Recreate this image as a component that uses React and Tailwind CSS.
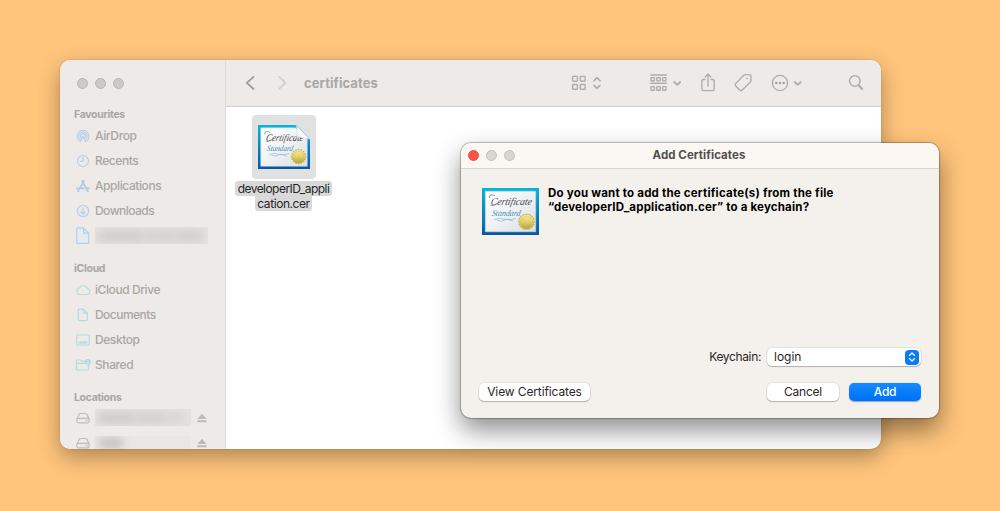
import React from 'react';

const SIDEBAR_ICONS = {
  airdrop: (
    <g stroke="#b3cfee" strokeWidth="1.1">
      <path d="M4.2 12.6A6 6 0 1 1 9.8 12.6" />
      <path d="M4.4 10.4A4.2 4.2 0 1 1 9.6 10.4" />
      <path d="M5.2 8.8A2.4 2.4 0 1 1 8.8 8.8" />
      <path d="M7 7.2L4.3 12.8M7 7.2L9.7 12.8" />
    </g>
  ),
  clock: (
    <g stroke="#b3cfee" strokeWidth="1.2">
      <circle cx="7" cy="7" r="5.5" />
      <path d="M7 3.2V7.3H4.2" />
    </g>
  ),
  apps: (
    <g stroke="#adcbed" strokeWidth="1.7">
      <path d="M6.1 2L10.9 10.9M11.3 11.6L12 12.6" />
      <path d="M8 2L3.8 9.4M2.9 11L2.1 12.5" />
      <path d="M.9 9.3H7.6M10.4 9.3H13.1" />
    </g>
  ),
  download: (
    <g stroke="#b3cfee" strokeWidth="1.2">
      <circle cx="7" cy="7" r="5.6" />
      <path d="M7 3.8V10M4.9 8L7 10.1L9.1 8" />
    </g>
  ),
  bigdoc: (
    <path d="M.8-1.2H7.6L12.7 4.1V14.3H.8ZM7.6-1.2V4.1H12.7" stroke="#b3cfee" strokeWidth="1.2" fill="#e6ebf2" />
  ),
  cloud: (
    <path
      d="M3.3 11.5H10.8A3.1 3.1 0 0 0 11.4 5.4A4.2 4.2 0 0 0 3.7 4.9A3.4 3.4 0 0 0 3.3 11.5Z"
      stroke="#bcdedb"
      strokeWidth="1.2"
    />
  ),
  doc: (
    <path
      d="M3.4 1.1H7.4L11.4 5.1V11.6Q11.4 12.7 10.3 12.7H3.4Q2.3 12.7 2.3 11.6V2.2Q2.3 1.1 3.4 1.1ZM7.4 1.1V5.1H11.4"
      stroke="#b2dbe0"
      strokeWidth="1.2"
    />
  ),
  desktop: (
    <g stroke="#b2dbe0">
      <rect x=".7" y="2" width="12.6" height="10" rx="1.2" strokeWidth="1.2" />
      <path d="M3.4 9.5H10.6" strokeWidth="1.8" />
    </g>
  ),
  shared: (
    <g stroke="#b2dbe0" strokeWidth="1.2">
      <path d="M9 3.2H5.8L4.7 2H1.4Q.4 2 .4 3V11Q.4 12 1.4 12H11.5Q12.5 12 12.5 11V7M.4 5.3H9.2" />
      <circle cx="12" cy="3.9" r="2.9" fill="#a9d8df" stroke="none" />
      <path d="M12 2.4V4.2M10.8 5.2H13.2" stroke="#edf0ef" strokeWidth=".8" />
    </g>
  ),
  disk: (
    <g stroke="#c1beba" strokeWidth="1.2">
      <path d="M1 8L3.2 3.3Q3.6 2.5 4.5 2.5H9.6Q10.5 2.5 10.9 3.3L13 8" />
      <rect x=".9" y="7.3" width="12.2" height="4.6" rx="1.7" />
      <path d="M10 9.7H11.3" />
    </g>
  ),
};

function SidebarIcon({ name }) {
  return (
    <svg className="h-3.5 w-3.5 shrink-0 overflow-visible" viewBox="0 0 14 14" fill="none" strokeLinecap="round" strokeLinejoin="round">
      {SIDEBAR_ICONS[name]}
    </svg>
  );
}

function Row({ icon, label, tracking = '' }) {
  return (
    <div className="flex h-[25px] shrink-0 items-center gap-[5px] pl-4">
      <SidebarIcon name={icon} />
      <span className={`text-[12px] font-medium leading-none text-[#aaa6a3] ${tracking}`}>{label}</span>
    </div>
  );
}

function Heading({ children }) {
  return (
    <div className="flex h-[18px] shrink-0 items-center pl-3.5 text-[10.5px] font-bold tracking-[-0.03em] text-[#aaa6a3]">
      {children}
    </div>
  );
}

function Redacted({ box, bars }) {
  return (
    <div className={`flex items-center overflow-hidden px-1 ${box}`}>
      {bars.map((b, i) => (
        <span key={i} className={`h-2.5 shrink-0 rounded blur-[4px] ${b}`} />
      ))}
    </div>
  );
}

function Drive({ bars, box }) {
  return (
    <div className="flex h-[25px] shrink-0 items-center pl-4">
      <SidebarIcon name="disk" />
      <div className="ml-[5px] w-24">
        <Redacted box={box} bars={bars} />
      </div>
      <svg className="ml-[6px] h-2.5 w-2.5" viewBox="0 0 10 10" fill="#bdbab7">
        <path d="M5 .8L9.6 5.9H.4ZM.4 7.2H9.6V9.2H.4Z" />
      </svg>
    </div>
  );
}

function Certificate({ folded, className }) {
  const id = folded ? 'folded' : 'flat';
  const scallops = Array.from({ length: 16 }, (_, i) => {
    const a = (i * Math.PI) / 8;
    return [44.5 + 7.3 * Math.cos(a), 34.5 + 7.3 * Math.sin(a)];
  });
  return (
    <svg className={className} viewBox="0 0 57 48" preserveAspectRatio="none">
      <defs>
        <linearGradient id={`${id}-frame`} x1="0" y1="0" x2="0" y2="1">
          <stop offset="0" stopColor="#05b5dc" />
          <stop offset="1" stopColor="#0757a0" />
        </linearGradient>
        <linearGradient id={`${id}-paper`} x1="0" y1="0" x2="1" y2="1">
          <stop offset="0" stopColor="#ffffff" />
          <stop offset=".5" stopColor="#f0f1f3" />
          <stop offset="1" stopColor="#dcdfe3" />
        </linearGradient>
        <linearGradient id={`${id}-seal`} x1="0" y1="0" x2="0" y2="1">
          <stop offset="0" stopColor="#f3ecab" />
          <stop offset=".5" stopColor="#e2d068" />
          <stop offset="1" stopColor="#b5a03c" />
        </linearGradient>
        <linearGradient id={`${id}-fold`} x1="0" y1="1" x2=".6" y2=".3">
          <stop offset="0" stopColor="#c9cacc" />
          <stop offset=".5" stopColor="#ffffff" />
          <stop offset="1" stopColor="#f1f1f1" />
        </linearGradient>
      </defs>
      <path d={folded ? 'M0 0H42L57 15V48H0Z' : 'M0 0H57V48H0Z'} fill={`url(#${id}-frame)`} />
      <path d={folded ? 'M3 3H41L54 15V45H3Z' : 'M3.3 3.3H53.7V44.7H3.3Z'} fill={`url(#${id}-paper)`} stroke="#b9d9e8" strokeWidth=".6" />
      <g transform="skewX(-12)" fontFamily="'Liberation Serif', serif" fontStyle="italic">
        <text x="12" y="17.5" fontSize="11" textLength="41" lengthAdjust="spacingAndGlyphs" fill="#4b4b4f">
          Certificate
        </text>
        <text x="15.5" y="28.5" fontSize="9" textLength="28.5" lengthAdjust="spacingAndGlyphs" fill="#3f8fbe">
          Standard
        </text>
      </g>
      <path d="M13 8C9 5.5 5.8 8.5 8 10.5M8.5 17.5Q11 19.5 15 16" fill="none" stroke="#66666b" strokeWidth=".7" />
      <path d="M12 32.3Q17 29.8 23 32Q29 34 34 31M15 33Q20 35 23 32.4Q28 30.5 31 34" fill="none" stroke="#8cbdd9" strokeWidth=".8" />
      {scallops.map(([x, y], i) => (
        <circle key={i} cx={x} cy={y} r="1.2" fill="#cbb651" />
      ))}
      <circle cx="44.5" cy="34.5" r="7.3" fill={`url(#${id}-seal)`} />
      <circle cx="44.5" cy="34.5" r="5.8" fill="none" stroke="#c9b550" strokeWidth=".4" />
      {folded && (
        <>
          <path d="M42-.5L57.5 15.5V-.5Z" fill="#e1e1e1" />
          <path d="M41.5 0Q44.5 8 42 14Q49 12.5 57 15.5Z" fill={`url(#${id}-fold)`} stroke="#cccccc" strokeWidth=".4" />
        </>
      )}
    </svg>
  );
}

function Lights({ first = 'border-[#b9b6b2] bg-[#cdcac6]', rest = 'border-[#b9b6b2] bg-[#cdcac6]' }) {
  return (
    <>
      <span className={`size-[11px] rounded-full border ${first}`} />
      <span className={`size-[11px] rounded-full border ${rest}`} />
      <span className={`size-[11px] rounded-full border ${rest}`} />
    </>
  );
}

function Toolbar() {
  return (
    <div className="flex h-[47px] shrink-0 items-center border-b border-[#d3d0cd] bg-[#eeeae7] pl-[19px]">
      <svg className="h-4 w-10 shrink-0 overflow-visible" viewBox="0 0 40 16" fill="none" strokeLinecap="round" strokeLinejoin="round">
        <path d="M8.5 1.8L1.8 7.9L8.5 14" stroke="#9d9a97" strokeWidth="1.7" />
        <path d="M34 1.8L40.3 7.9L34 14" stroke="#cfccc9" strokeWidth="1.6" />
      </svg>
      <span className="ml-[19px] w-[259px] text-[13px] font-bold leading-none tracking-[0.005em] text-[#aaa7a4]">certificates</span>
      <svg className="h-6 w-[300px] shrink-0" viewBox="563 71 300 24" fill="none" stroke="#b0adaa" strokeWidth="1.4" strokeLinecap="round" strokeLinejoin="round">
        <rect x="572.6" y="76.4" width="4.8" height="4.8" rx=".6" />
        <rect x="580.3" y="76.4" width="4.8" height="4.8" rx=".6" />
        <rect x="572.6" y="84.5" width="4.8" height="4.8" rx=".6" />
        <rect x="580.3" y="84.5" width="4.8" height="4.8" rx=".6" />
        <path d="M594 80.6L597 77.6L600 80.6M594 85.4L597 88.4L600 85.4" strokeWidth="1.7" />
        <path d="M650.8 75H666.3M650.8 83.2H666.3" />
        <rect x="651" y="77.6" width="3.4" height="3.2" rx=".5" />
        <rect x="656.8" y="77.6" width="3.4" height="3.2" rx=".5" />
        <rect x="662.6" y="77.6" width="3.4" height="3.2" rx=".5" />
        <rect x="651" y="86.6" width="3.4" height="3.6" rx=".5" />
        <rect x="656.8" y="86.6" width="3.4" height="3.6" rx=".5" />
        <rect x="662.6" y="86.6" width="3.4" height="3.6" rx=".5" />
        <path d="M674.3 82L677.3 84.8L680.3 82" strokeWidth="1.8" />
        <path d="M705 79.5H703.2Q701.9 79.5 701.9 80.8V89.3Q701.9 90.6 703.2 90.6H712.9Q714.2 90.6 714.2 89.3V80.8Q714.2 79.5 712.9 79.5H711M708 86V74.3M705.2 76.9L708 74.1L710.8 76.9" />
        <path d="M735.7 83.4L743.8 75.3Q744.5 74.6 745.5 74.6H749Q751 74.6 751 76.6V80.2Q751 81.2 750.3 81.9L742.3 90Q741 91.3 739.7 90L735.7 86Q734.5 84.7 735.7 83.4Z" />
        <circle cx="747" cy="78.4" r=".8" fill="#aba8a5" stroke="none" />
        <circle cx="780" cy="83" r="7.6" />
        <g fill="#a19e9b" stroke="none">
          <circle cx="776.3" cy="83" r="1.2" />
          <circle cx="780" cy="83" r="1.2" />
          <circle cx="783.7" cy="83" r="1.2" />
        </g>
        <path d="M794.7 82L797.7 84.8L800.7 82" strokeWidth="1.8" />
        <circle cx="854.8" cy="81" r="5.3" strokeWidth="1.5" />
        <path d="M858.8 85.2L862.1 89" strokeWidth="2.1" />
      </svg>
    </div>
  );
}

function Finder() {
  return (
    <section className="flex h-[389px] w-[821px] overflow-hidden rounded-[10px] bg-white shadow-[0_0_1px_rgba(0,0,0,0.5),0_8px_22px_rgba(0,0,0,0.32)]">
      <aside className="flex w-[166px] shrink-0 flex-col overflow-hidden border-r border-[#e0dcd9] bg-[#eeeae7]">
        <div className="flex h-[46px] shrink-0 items-center gap-[7px] pl-[17px]">
          <Lights />
        </div>
        <Heading>Favourites</Heading>
        <div className="-mt-px h-0 shrink-0" />
        <Row icon="airdrop" label="AirDrop" tracking="tracking-[-0.03em]" />
        <Row icon="clock" label="Recents" tracking="tracking-[-0.035em]" />
        <Row icon="apps" label="Applications" tracking="tracking-[-0.035em]" />
        <Row icon="download" label="Downloads" tracking="tracking-[-0.045em]" />
        <div className="flex h-[25px] shrink-0 items-center gap-[5px] pl-4">
          <SidebarIcon name="bigdoc" />
          <Redacted box="h-[17px] w-[113px] bg-[#e4e1de]" bars={['w-11 bg-[#cfccc9]', 'w-8 bg-[#d3d0cd]', 'w-7 bg-[#d1cecb]']} />
        </div>
        <div className="h-3 shrink-0" />
        <Heading>iCloud</Heading>
        <div className="-mt-px h-0 shrink-0" />
        <Row icon="cloud" label="iCloud Drive" tracking="tracking-[-0.035em]" />
        <Row icon="doc" label="Documents" tracking="tracking-[-0.045em]" />
        <Row icon="desktop" label="Desktop" tracking="tracking-[-0.035em]" />
        <Row icon="shared" label="Shared" tracking="tracking-[-0.035em]" />
        <div className="h-3 shrink-0" />
        <Heading>Locations</Heading>
        <div className="-mt-0.5 h-0 shrink-0" />
        <Drive box="h-[17px] bg-[#e4e1de]" bars={['w-9 bg-[#cdcac7]', 'w-8 bg-[#d2cfcc]', 'w-4 bg-[#d8d5d2]']} />
        <Drive box="h-[13px] bg-[#e9e6e3]" bars={['w-6 bg-[#c3c0bd]']} />
      </aside>
      <div className="flex min-w-0 flex-1 flex-col">
        <Toolbar />
        <div className="flex w-[115px] flex-col items-center pt-2">
          <div className="flex size-16 items-center justify-center rounded bg-[#e1e1e1]">
            <Certificate folded className="h-[44px] w-[52px]" />
          </div>
          <div className="mt-[2px] flex flex-col items-center whitespace-nowrap text-[12px] leading-[14.5px] text-[#262626]">
            <span className="flex h-[15px] w-[97px] justify-center rounded-[3px] bg-[#d9d9d9] pt-[0.5px] tracking-[-0.045em]">developerID_appli</span>
            <span className="flex h-[15px] w-[57px] justify-center rounded-b-[3px] bg-[#d9d9d9] pt-[0.5px] tracking-[-0.035em]">cation.cer</span>
          </div>
        </div>
      </div>
    </section>
  );
}

function Button({ className, children }) {
  return (
    <button className={`flex h-[18px] items-center justify-center rounded-[5px] text-[12px] leading-none ${className}`}>{children}</button>
  );
}

const PLAIN = 'bg-white text-[#292827] shadow-[0_0_0_0.5px_rgba(0,0,0,0.12),0_1px_1px_rgba(0,0,0,0.22)]';

function Dialog() {
  return (
    <section
      role="dialog"
      className="absolute left-[461px] top-[143px] flex h-[275px] w-[478px] flex-col overflow-hidden rounded-[10px] bg-[#f4f0eb] shadow-[0_0_0_1px_rgba(0,0,0,0.13),0_0_2px_rgba(0,0,0,0.4),0_12px_26px_rgba(0,0,0,0.45)]"
    >
      <header className="flex h-[26px] shrink-0 items-center gap-[7px] border-b border-[#dad5d0] bg-[#fbf7f2] pl-[7px]">
        <Lights first="border-[#ed4f49] bg-[#fe514c]" rest="border-[#c4c0bb] bg-[#d9d6d1]" />
        <h1 className="w-[340px] pl-[14px] text-center text-[11.5px] font-bold leading-none tracking-[0.005em] text-[#504e4c]">Add Certificates</h1>
      </header>
      <div className="flex gap-[9px] pl-[21px] pt-[19px]">
        <Certificate className="h-[47px] w-[57px]" />
        <p className="-mt-0.5 whitespace-nowrap text-[11.5px] font-bold leading-[14px] text-black">
          <span className="tracking-[0.21px]">Do you want to add the certificate(s) from the file</span>
          <br />
          <span className="tracking-[0.19px]">“developerID_application.cer” to a keychain?</span>
        </p>
      </div>
      <div className="mt-auto flex items-center justify-end pr-[18px] text-[12px] leading-none text-[#292827]">
        <span className="mr-[6px] tracking-[-0.03em]">Keychain:</span>
        <div className={`flex h-[18px] w-[154px] items-center justify-between rounded-[5px] pl-[7px] pr-[2px] ${PLAIN}`}>
          <span>login</span>
          <span className="flex h-[15px] w-3.5 items-center justify-center rounded-[4px] bg-[#087cf7]">
            <svg className="h-3 w-2.5" viewBox="0 0 10 12" fill="none" stroke="white" strokeWidth="1.3" strokeLinecap="round" strokeLinejoin="round">
              <path d="M2.4 4.4L5 2L7.6 4.4M2.4 7.6L5 10L7.6 7.6" />
            </svg>
          </span>
        </div>
      </div>
      <footer className="mb-[17px] mt-[17px] flex items-center pl-[18px] pr-[18px]">
        <Button className={`w-[111px] tracking-[-0.01em] ${PLAIN}`}>View Certificates</Button>
        <Button className={`ml-auto w-[72px] tracking-[-0.02em] ${PLAIN}`}>Cancel</Button>
        <Button className="ml-[10px] w-[72px] bg-linear-to-b from-[#158bff] to-[#0070f5] font-medium tracking-[-0.02em] text-white shadow-[0_0.5px_1px_rgba(0,60,150,0.4)]">Add</Button>
      </footer>
    </section>
  );
}

export default function App() {
  return (
    <main className="relative h-[511px] w-[1000px] overflow-hidden bg-[#ffc57c] pl-[60px] pt-[60px] font-['Inter','Liberation_Sans',sans-serif]">
      <Finder />
      <Dialog />
    </main>
  );
}
